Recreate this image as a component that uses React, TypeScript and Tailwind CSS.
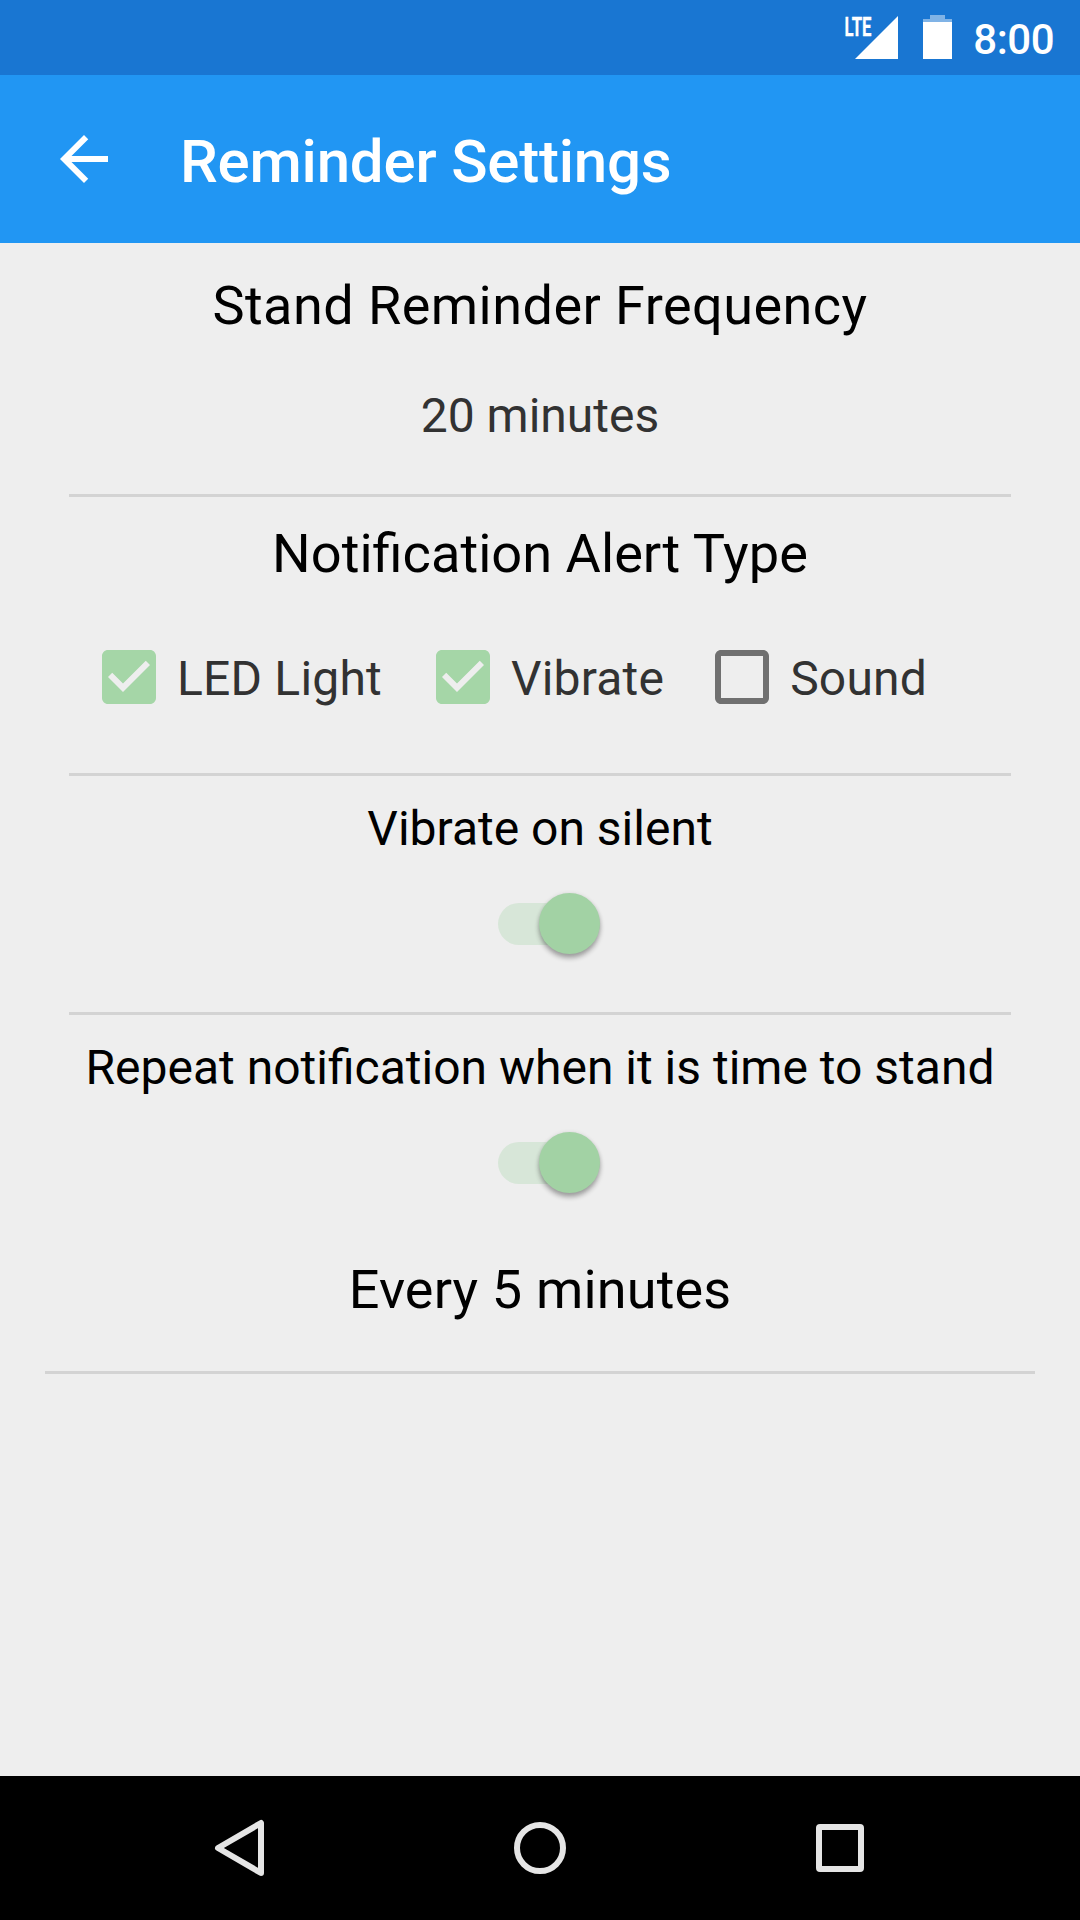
import { ReactNode } from "react";

function Divider({ wide = false }: { wide?: boolean }) {
  return <div className={wide ? "mx-[45px] h-[3px] bg-[#d3d3d3]" : "mx-[69px] h-[3px] bg-[#d3d3d3]"} />;
}

function StatusBar() {
  return (
    <div className="flex h-[75px] items-center justify-end bg-[#1976d2] pr-[26px] text-white">
      <svg className="overflow-visible" width="54" height="45" viewBox="0 0 54 45" fill="white">
        <text
          x="0.5"
          y="20.5"
          fontFamily="Roboto"
          fontWeight="700"
          fontSize="26"
          textLength="27"
          lengthAdjust="spacingAndGlyphs"
          stroke="white"
          strokeWidth="0.3"
        >
          LTE
        </text>
        <path d="M54 1v43H11z" />
      </svg>
      <svg className="ml-[25px]" width="29" height="45" viewBox="0 0 29 45" fill="white">
        <path d="M7 0h15v4h7v3H0V4h7z" opacity=".45" />
        <path d="M0 7h29v37H0z" />
      </svg>
      <span className="ml-[21px] pt-[4px] text-[42px] font-medium tracking-[-0.5px]">8:00</span>
    </div>
  );
}

function AppBar() {
  return (
    <div className="flex h-[168px] items-center bg-[#2196f3] text-white">
      <svg className="ml-[48px]" width="72" height="72" viewBox="0 0 24 24" fill="white">
        <path d="M20 11H7.83l5.59-5.59L12 4l-8 8 8 8 1.41-1.41L7.83 13H20v-2z" />
      </svg>
      <h1 className="ml-[60px] pt-[5px] text-[60px] font-medium tracking-[-0.2px]">Reminder Settings</h1>
    </div>
  );
}

function Checkbox({ label, checked = false }: { label: string; checked?: boolean }) {
  return (
    <div className="flex items-center">
      <svg width="54" height="54" viewBox="3 3 18 18">
        {checked ? (
          <path
            fill="#a5d6a7"
            d="M19 3H5c-1.11 0-2 .9-2 2v14c0 1.1.89 2 2 2h14c1.11 0 2-.9 2-2V5c0-1.1-.89-2-2-2zm-9 14l-5-5 1.41-1.41L10 14.17l7.59-7.59L19 8l-9 9z"
          />
        ) : (
          <path
            fill="#707070"
            d="M19 5v14H5V5h14m0-2H5c-1.1 0-2 .9-2 2v14c0 1.1.9 2 2 2h14c1.1 0 2-.9 2-2V5c0-1.1-.9-2-2-2z"
          />
        )}
      </svg>
      <span className="ml-[21px] pt-[3px] text-[48px] leading-none tracking-[0.2px] text-[#323232]">{label}</span>
    </div>
  );
}

function Switch() {
  return (
    <div className="ml-[498px] flex h-[61px] w-[102px] items-center justify-end rounded-full">
      <div className="-mr-[61px] h-[42px] w-[102px] shrink-0 rounded-full bg-[#d7e6d8]" />
      <div className="h-[61px] w-[61px] shrink-0 rounded-full bg-[#a2d2a4] shadow-[0_4px_5px_rgba(0,0,0,0.32),0_0_4px_rgba(0,0,0,0.08)]" />
    </div>
  );
}

function SwitchLabel({ children }: { children: ReactNode }) {
  return <p className="mb-[36px] text-center text-[48px] leading-[56px] text-black">{children}</p>;
}

export default function App() {
  return (
    <div className="flex h-[1920px] w-[1080px] flex-col overflow-hidden bg-[#eeeeee] font-['Roboto',sans-serif]">
      <StatusBar />
      <AppBar />
      <main className="flex-1">
        <div className="h-[251px] pt-[31px]">
          <h2 className="text-center text-[54px] leading-[64px] tracking-[0.46px] text-black">Stand Reminder Frequency</h2>
          <p className="pt-[50px] text-center text-[48px] leading-[56px] text-[#323232]">20 minutes</p>
        </div>
        <Divider />
        <div className="h-[276px] pt-[25px]">
          <h2 className="text-center text-[54.2px] leading-[64px] text-black">Notification Alert Type</h2>
          <div className="flex pt-[64px] pl-[102px]">
            <Checkbox label="LED Light" checked />
            <div className="mr-[51px] ml-[54px]">
              <Checkbox label="Vibrate" checked />
            </div>
            <Checkbox label="Sound" />
          </div>
        </div>
        <Divider />
        <div className="h-[236px] pt-[25px]">
          <SwitchLabel>Vibrate on silent</SwitchLabel>
          <Switch />
        </div>
        <Divider />
        <div className="h-[356px] pt-[25px]">
          <SwitchLabel>Repeat notification when it is time to stand</SwitchLabel>
          <Switch />
          <p className="pt-[65px] text-center text-[54px] leading-[64px] tracking-[0.16px] text-black">Every 5 minutes</p>
        </div>
        <Divider wide />
      </main>
      <nav className="flex h-[144px] items-center bg-black">
        <svg width="1080" height="144" fill="none" stroke="#e5e5e5" strokeWidth="6" strokeLinejoin="round">
          <path d="M261 47v50l-43-25z" />
          <circle cx="540" cy="72" r="23" />
          <rect x="819" y="51" width="42" height="42" rx="1" />
        </svg>
      </nav>
    </div>
  );
}
